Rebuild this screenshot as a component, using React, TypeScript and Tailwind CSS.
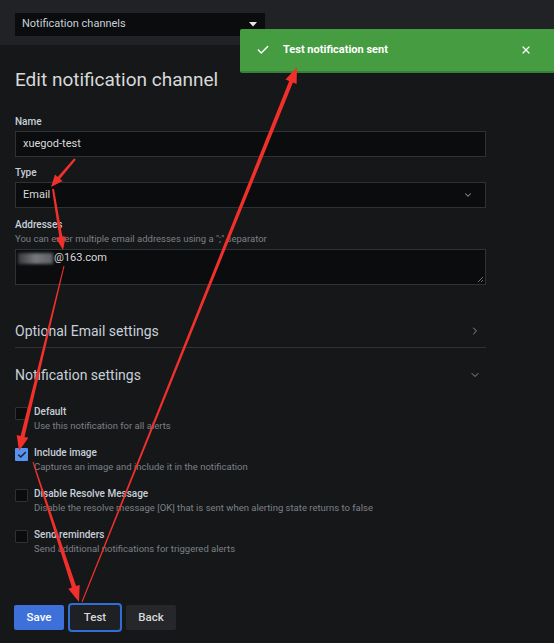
import { ChevronDown, ChevronRight, Check, X } from "lucide-react";

type Pt = [number, number];

// tapered red annotation arrow drawn as a single polygon
function arrowPoints(tail: Pt, head: Pt, w0: number, w1: number, len: number, half: number) {
  const dx = head[0] - tail[0];
  const dy = head[1] - tail[1];
  const d = Math.hypot(dx, dy);
  const ux = dx / d;
  const uy = dy / d;
  const nx = -uy;
  const ny = ux;
  const bx = head[0] - ux * len;
  const by = head[1] - uy * len;
  const pts: Pt[] = [
    [tail[0] + (nx * w0) / 2, tail[1] + (ny * w0) / 2],
    [bx + (nx * w1) / 2, by + (ny * w1) / 2],
    [bx + nx * half, by + ny * half],
    head,
    [bx - nx * half, by - ny * half],
    [bx - (nx * w1) / 2, by - (ny * w1) / 2],
    [tail[0] - (nx * w0) / 2, tail[1] - (ny * w0) / 2],
  ];
  return pts.map((p) => `${p[0].toFixed(1)},${p[1].toFixed(1)}`).join(" ");
}

const arrows: { tail: Pt; head: Pt; w0: number; w1: number; len: number; half: number }[] = [
  { tail: [82, 602], head: [297, 67], w0: 1, w1: 4, len: 16, half: 6 },
  { tail: [64, 266], head: [19, 451], w0: 1, w1: 4, len: 15, half: 6 },
  { tail: [33, 462], head: [79, 602], w0: 1, w1: 4.5, len: 16, half: 6 },
  { tail: [53, 189], head: [63, 250], w0: 2, w1: 3, len: 13, half: 5 },
  { tail: [75, 159], head: [51, 187], w0: 2, w1: 3, len: 12, half: 5 },
];

const options = [
  { label: "Default", desc: "Use this notification for all alerts", checked: false },
  { label: "Include image", desc: "Captures an image and include it in the notification", checked: true },
  {
    label: "Disable Resolve Message",
    desc: "Disable the resolve message [OK] that is sent when alerting state returns to false",
    checked: false,
  },
  { label: "Send reminders", desc: "Send additional notifications for triggered alerts", checked: false },
];

function Label({ children, className = "" }: { children: React.ReactNode; className?: string }) {
  return (
    <div className={`text-[10px] leading-[14px] font-medium text-[#c7d0d9] ${className}`}>{children}</div>
  );
}

export default function App() {
  return (
    <div className="relative w-[554px] h-[643px] overflow-hidden bg-[#161719] font-['Roboto',sans-serif] text-[#d8d9da]">
      <div className="h-[45px] bg-[#202226] pt-[13px] pl-[15px]">
        <div className="w-[250px] h-[23px] bg-[#0b0c0e] flex items-center justify-between pl-[7px] pr-[7px] text-[11px] text-[#c7d0d9]">
          <span>Notification channels</span>
          <svg width="8" height="5" viewBox="0 0 8 5" className="mr-[1px]">
            <path d="M0 0 H8 L4 4.5 Z" fill="#e6e6e6" />
          </svg>
        </div>
      </div>

      <div className="ml-[15px] w-[471px]">
        <h1 className="mt-[23px] text-[19px] leading-[24px] font-normal text-[#d8d9da]">Edit notification channel</h1>

        <Label className="mt-[23px]">Name</Label>
        <div className="mt-[2px] h-[26px] bg-[#0b0c0e] border border-[#2c3235] flex items-center px-[7px] text-[11px]">
          xuegod-test
        </div>

        <Label className="mt-[9px]">Type</Label>
        <div className="mt-[2px] h-[26px] bg-[#0b0c0e] border border-[#2c3235] flex items-center justify-between px-[7px] text-[11px]">
          <span>Email</span>
          <ChevronDown size={10} strokeWidth={2.5} className="text-[#8e8e8e] mr-[5px]" />
        </div>

        <Label className="mt-[10px]">Addresses</Label>
        <div className="text-[9.5px] leading-[14px] text-[#7b8087]">
          You can enter multiple email addresses using a &quot;;&quot; separator
        </div>
        <div className="relative mt-[3px] h-[36px] bg-[#0b0c0e] border border-[#2c3235] pt-[1px] text-[11px]">
          <div className="flex items-center h-[14px]">
            <span className="ml-[2px] inline-block w-[35px] h-[11px] blur-[1.5px] bg-gradient-to-r from-[#3a3b3e] via-[#77787c] to-[#5e5f63]" />
            <span className="ml-[1px]">@163.com</span>
          </div>
          <svg width="7" height="7" viewBox="0 0 7 7" className="absolute right-[1px] bottom-[1px]">
            <path d="M6 1 L1 6 M6 4 L4 6" stroke="#6b6e73" strokeWidth="1" />
          </svg>
        </div>

        <div className="mt-[36px] flex items-center justify-between pb-[6px] border-b border-[#2c3235]">
          <span className="text-[14px] leading-[20px] text-[#c7d0d9]">Optional Email settings</span>
          <ChevronRight size={12} strokeWidth={2} className="text-[#8e8e8e] mr-[5px]" />
        </div>

        <div className="mt-[17px] flex items-center justify-between">
          <span className="text-[14px] leading-[20px] text-[#c7d0d9]">Notification settings</span>
          <ChevronDown size={12} strokeWidth={2} className="text-[#8e8e8e] mr-[5px]" />
        </div>

        <div className="mt-[20px] flex flex-col gap-[13px]">
          {options.map((o) => (
            <div key={o.label} className="flex">
              <div
                className={`mt-[2px] w-[13px] h-[13px] shrink-0 rounded-[1px] flex items-center justify-center ${
                  o.checked ? "bg-[#5794f2]" : "bg-[#0b0c0e] border border-[#2c3235]"
                }`}
              >
                {o.checked && <Check size={10} strokeWidth={3.5} className="text-[#1b1f2b]" />}
              </div>
              <div className="ml-[6px]">
                <Label>{o.label}</Label>
                <div className="text-[9.5px] leading-[14px] text-[#7b8087] whitespace-nowrap">{o.desc}</div>
              </div>
            </div>
          ))}
        </div>

        <div className="mt-[49px] -ml-[1px] flex gap-[6px]">
          <button className="w-[50px] h-[25px] rounded-[2px] bg-[#3d71d9] text-white text-[11.5px] font-medium">
            Save
          </button>
          <button className="w-[50px] h-[25px] rounded-[2px] bg-[#1f2024] ring-2 ring-[#2f6ed4] text-[#d8d9da] text-[11.5px] font-medium">
            Test
          </button>
          <button className="w-[50px] h-[25px] rounded-[2px] bg-[#25272b] text-[#d8d9da] text-[11.5px] font-medium">
            Back
          </button>
        </div>
      </div>

      <div className="absolute left-[240px] top-[29px] w-[320px] h-[44px] rounded-[2px] bg-[#469c41] border-b-[2px] border-[#37803a] flex items-center pl-[16px] pr-[20px] text-white">
        <Check size={14} strokeWidth={2.5} />
        <span className="ml-[13px] text-[11px] font-bold">Test notification sent</span>
        <X size={12} strokeWidth={2.5} className="ml-auto mr-[8px]" />
      </div>

      <svg className="absolute inset-0 pointer-events-none" width="554" height="643" viewBox="0 0 554 643">
        {arrows.map((a, i) => (
          <polygon key={i} points={arrowPoints(a.tail, a.head, a.w0, a.w1, a.len, a.half)} fill="#f2302b" />
        ))}
      </svg>
    </div>
  );
}
